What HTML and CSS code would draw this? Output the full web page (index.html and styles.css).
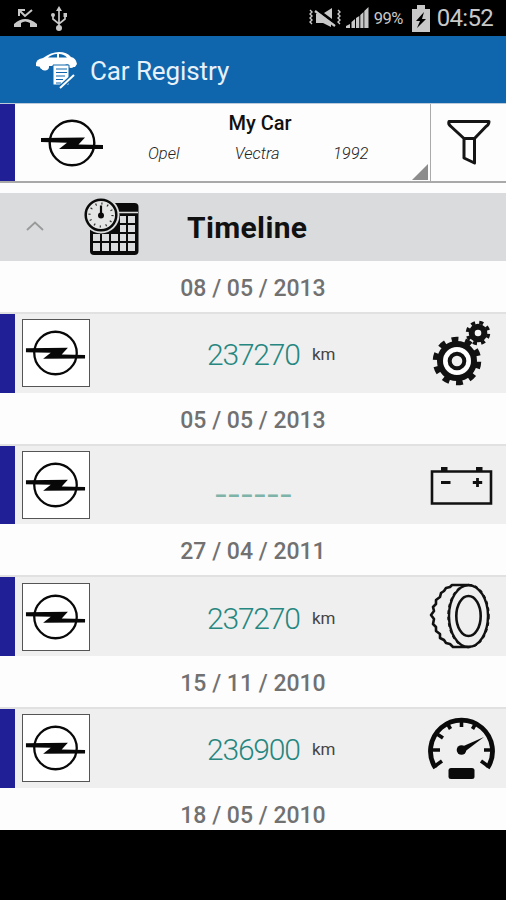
FILE: index.html
```html
<!DOCTYPE html>
<html lang="en">
<head>
<meta charset="utf-8">
<title>Car Registry</title>
<link rel="stylesheet" href="styles.css">
</head>
<body>
<svg class="defs" width="0" height="0">
  <symbol id="opel" viewBox="-32 -25 64 50">
    <circle r="22.300" fill="none" stroke="#080808" stroke-width="2.400"/>
    <path fill="#080808" d="M-31-4.900 13-5.600 6.500 1.600 31 2V5.900L-13 6-5-.2-31-.9Z"/>
  </symbol>
</svg>
<div class="status">
  <svg class="status-left" width="50" height="26" viewBox="0 0 50 26">
    <path d="M1 22V19Q12 9 24 19V22H17V18Q12 15 8 18V22Z" fill="#c8c8c8"/>
    <path d="M6 11V5H12M7 6 12 11 19 5" fill="none" stroke="#c8c8c8" stroke-width="2"/>
    <path d="M46 4V23M40 9V14L46 19 52 14V9" fill="none" stroke="#c8c8c8" stroke-width="1.700"/>
    <path d="M46 1 49 6H43Z" fill="#c8c8c8"/><circle cx="46" cy="23" r="3" fill="#c8c8c8"/><circle cx="40" cy="10" r="2" fill="#c8c8c8"/><path d="M50.500 8h3.500v4h-3.500z" fill="#c8c8c8"/>
  </svg>
  <svg class="signal" width="62" height="24" viewBox="0 0 62 24">
    <g fill="none" stroke="#c8c8c8" stroke-width="1.400"><path d="M2 4 4 6 2 8 4 10 2 12 4 14 2 16 4 18M30 4 32 6 30 8 32 10 30 12 32 14 30 16 32 18"/><path d="M7 5 27 20" stroke-width="2.200"/></g>
    <path d="M8 8V17H15L23 21V17L12 8ZM16 7 24 2V13Z" fill="#c8c8c8"/><path d="M9 4 29 19" stroke="#000"/>
    <path fill="#c8c8c8" d="M38 22V20L42 18V22ZM43.500 22V16L47 13V22ZM48 22V12L51.300 10V22ZM52.300 22V9L55.500 6V22ZM56.300 22V5L60.500 1V22Z"/>
  </svg>
  <span class="percent">99%</span>
  <svg class="charge" width="18" height="27" viewBox="0 0 18 27"><path d="M0 4H5V0H13V4H18V27H0Z" fill="#c8c8c8"/><path d="M12 7 4 16H8L5 23 14 14H10Z" fill="#000"/></svg>
  <span class="clock">04:52</span>
</div>
<header class="appbar">
  <svg width="42" height="38" viewBox="0 0 42 38">
    <path fill="#fff" d="M1 15Q0 8 8 7 16 1 24 1 32 1 36 6 41 7 42 13L40 16H36A4 4 0 0 0 29 15H14A4 4 0 0 1 6 16Z"/>
    <circle cx="8" cy="15" r="3.200" fill="#fff"/><circle cx="36" cy="14" r="3" fill="#fff"/>
    <path fill="#0f66ad" d="M13 6.500Q17 3 22 3V6.500ZM24 3Q29 3 32 6.500H24Z"/>
    <path d="M18 14H34V34H18Z" fill="#fff" stroke="#0f66ad"/>
    <path d="M21 18H32M21 21.500H32M21 25H30M21 28.500H28M21 32H26" stroke="#0f66ad" stroke-width="1.200"/>
    <path d="M26 36 38 25" stroke="#0f66ad" stroke-width="4.500"/><path d="M25 37 39 24" stroke="#fff" stroke-width="2"/>
  </svg>
  <h1>Car Registry</h1>
</header>
<section class="car">
  <div class="stripe"></div>
  <div class="spinner">
    <svg class="car-logo" width="64" height="50"><use href="#opel"/></svg>
    <div class="car-info">
      <div class="car-name">My Car</div>
      <div class="car-spec"><span>Opel</span><span>Vectra</span><span>1992</span></div>
    </div>
  </div>
  <div class="filter">
    <svg width="46" height="48" viewBox="0 0 46 48"><path d="M3 3.500H43Q43 6.500 40 8.500L28.500 20.500H18L5 8.500Q2 6.500 3 3.500ZM18 21V40L28.500 45V21" fill="none" stroke="#151515" stroke-width="3" stroke-linejoin="round"/></svg>
  </div>
</section>
<section class="group">
  <svg class="chevron" width="18" height="10" viewBox="0 0 18 10"><path d="M1 9 9 1.500 17 9" fill="none" stroke="#999" stroke-width="1.800"/></svg>
  <svg class="calendar" width="56" height="58" viewBox="0 0 56 58">
    <rect x="6" y="5" width="48.500" height="52" rx="4" fill="#0a0a0a"/>
    <path d="M8 14.500H54" stroke="#d9dbdc" stroke-width="1.600"/>
    <path fill="#d9dbdc" d="M36 18h6v7h-6zM44 18h7v7h-7zM36 27h6v7h-6zM44 27h7v7h-7zM9 36h7v7H9zM18 36h7v7h-7zM27 36h7v7h-7zM36 36h6v7h-6zM44 36h7v7h-7zM9 45h7v8H9zM18 45h7v8h-7zM27 45h7v8h-7zM36 45h6v8h-6zM44 45h7v8h-7z"/>
    <circle cx="17" cy="17" r="18.500" fill="#d9dbdc"/><circle cx="17" cy="17" r="15.300" fill="#e4e5e5" stroke="#0a0a0a" stroke-width="2.500"/>
    <circle cx="17" cy="17" r="11.500" fill="none" stroke="#333" stroke-width="2.200" stroke-dasharray="1.200 4.821"/>
    <path d="M17 17V7.500" stroke="#0a0a0a" stroke-width="2.200"/><circle cx="17" cy="17.500" r="3" fill="#0a0a0a"/>
  </svg>
  <h2>Timeline</h2>
</section>
<main class="timeline">
  <div class="date">08 / 05 / 2013</div>
  <article class="entry">
    <div class="stripe"></div>
    <div class="badge"><svg width="61" height="48"><use href="#opel"/></svg></div>
    <div class="reading"><span class="digits">237270</span><span class="unit">km</span></div>
    <svg class="kind" width="70" height="70" viewBox="0 0 70 70">
      <circle cx="31" cy="43" r="21.500" fill="none" stroke="#111" stroke-width="5.500" stroke-dasharray="6.750 6.759" transform="rotate(2 31 43)"/>
      <circle cx="31" cy="43" r="17" fill="none" stroke="#111" stroke-width="6"/>
      <circle cx="31" cy="43" r="11.500" fill="none" stroke="#fff" stroke-width="4"/>
      <circle cx="31" cy="43" r="7.300" fill="#efefef" stroke="#111" stroke-width="4"/>
      <circle cx="52" cy="15" r="10.500" fill="none" stroke="#111" stroke-width="3.500" stroke-dasharray="4.120 4.127" transform="rotate(5 52 15)"/>
      <circle cx="52" cy="15" r="6.300" fill="#f5f5f5" stroke="#111" stroke-width="6"/>
    </svg>
  </article>
  <div class="date">05 / 05 / 2013</div>
  <article class="entry">
    <div class="stripe"></div>
    <div class="badge"><svg width="61" height="48"><use href="#opel"/></svg></div>
    <div class="reading"><span class="digits blank">______</span></div>
    <svg class="kind" width="70" height="70" viewBox="0 0 70 70">
      <path d="M6 21.500H65V53.500H6Z" fill="none" stroke="#111" stroke-width="2.600"/>
      <path d="M15 17h6.500v4H15zM50 17h6.500v4H50z" fill="#111"/><path d="M15 32.500H24.500M46.800 32.500H56.200M51.500 28V37" stroke="#111" stroke-width="2.800"/>
    </svg>
  </article>
  <div class="date">27 / 04 / 2011</div>
  <article class="entry">
    <div class="stripe"></div>
    <div class="badge"><svg width="61" height="48"><use href="#opel"/></svg></div>
    <div class="reading"><span class="digits">237270</span><span class="unit">km</span></div>
    <svg class="kind" width="70" height="70" viewBox="0 0 70 70">
      <g fill="none" stroke="#111" stroke-width="2.600" stroke-linejoin="round">
        <path d="M43 3H26L24 5 20 6 18 9 15 11 14 15 10 18 10 22 7 25 8 29 5 33 8 37 7 42 10 45 10 49 14 52 14 56 18 58 20 61 24 62 27 65H43"/>
        <ellipse cx="42.500" cy="34" rx="19.500" ry="30.800" fill="#efefef" stroke-width="2.400"/>
        <ellipse cx="42.500" cy="34" rx="20.500" ry="31.500" stroke-width="1.500" stroke-dasharray="3.500 3"/>
        <ellipse cx="42.500" cy="34" rx="12.200" ry="20" stroke-width="2.600"/>
      </g>
    </svg>
  </article>
  <div class="date">15 / 11 / 2010</div>
  <article class="entry">
    <div class="stripe"></div>
    <div class="badge"><svg width="61" height="48"><use href="#opel"/></svg></div>
    <div class="reading"><span class="digits">236900</span><span class="unit">km</span></div>
    <svg class="kind" width="70" height="70" viewBox="0 0 70 70">
      <path d="M9.500 55A31 31 0 1 1 61.500 55" fill="none" stroke="#0a0a0a" stroke-width="4.800"/>
      <path d="M9 53 16 48M5 37H14M11 21 17 25M20.500 9 24.500 16M35.500 6V14M50.500 9 46.500 16M67 37H58M62 53 55 48" stroke="#0a0a0a" stroke-width="3.600"/>
      <circle cx="35.500" cy="37" r="4.800" fill="#0a0a0a"/><path d="M33 35 58 24 37 40Z" fill="#0a0a0a"/>
      <rect x="22.500" y="55" width="26" height="11" rx="2.500" fill="#0a0a0a"/>
    </svg>
  </article>
  <div class="date">18 / 05 / 2010</div>
</main>
</body>
</html>
```

FILE: styles.css
```css
* { box-sizing: border-box; }
body {
  margin: 0;
  height: 900px;
  overflow: hidden;
  background: #000;
  font-family: Roboto, sans-serif;
  color: #111;
}
h1, h2 { margin: 0; }
svg { display: block; flex: none; }
.defs { position: absolute; }

.status {
  display: flex;
  height: 36px;
  padding: 5px 13px 0 13px;
  color: #c8c8c8;
}
.status-left { overflow: visible; }
.signal { margin: 1px 0 0 auto; }
.percent { width: 43px; padding-left: 4px; font-size: 16.500px; line-height: 28px; letter-spacing: -0.5px; }
.charge { margin-left: -1px; }
.clock { margin-left: 7px; font-size: 24px; line-height: 27px; letter-spacing: -0.7px; white-space: nowrap; }

.appbar {
  display: flex;
  align-items: center;
  gap: 13px;
  height: 67px;
  padding: 1px 0 0 35px;
  background: #0f66ad;
  color: #fff;
}
.appbar h1 { padding-top: 1px; font-size: 26px; font-weight: 400; letter-spacing: -0.1px; color: #e6f1fb; }

.car { display: flex; height: 80px; background: #fdfdfd; border-bottom: 2px solid #a9a9a9; border-top: 1px solid #bccbd9; }
.stripe { width: 15px; flex: none; background: #211f96; }
.spinner { position: relative; display: flex; flex: 1; padding-left: 25px; border-right: 1px solid #aaa; }
.spinner::after {
  content: "";
  position: absolute;
  right: 2px;
  bottom: 1px;
  border-left: 16px solid transparent;
  border-bottom: 16px solid #8c8c8c;
}
.car-logo { margin-top: 14px; }
.car-info { width: 282px; margin-left: 15px; padding-top: 7px; text-align: center; }
.car-name { font-size: 20px; font-weight: 500; line-height: 24px; color: #111; }
.car-spec { display: grid; grid-template-columns: repeat(3, 93.500px); margin-left: -2px; padding-top: 9px; font-size: 16.500px; line-height: 20px; font-style: italic; font-weight: 300; color: #222; }
.filter { width: 75px; padding: 14px 0 0 15px; }

.group {
  display: flex;
  height: 78px;
  padding-left: 26px;
  border-top: 10px solid #fdfdfd;
  background: #d9dbdc;
}
.chevron { margin-top: 28px; }
.calendar { margin: 5px 0 0 40px; }
.group h2 { margin-left: 47px; font-size: 30px; font-weight: 700; line-height: 70px; letter-spacing: 0.350px; }

.timeline { height: 569px; overflow: hidden; background: #fdfdfd; }
.date { height: 51px; font-size: 23px; font-weight: 500; line-height: 55px; text-align: center; color: #717171; }
.entry {
  display: flex;
  align-items: center;
  height: 80.700px;
  border-top: 2px solid #e1e1e1;
  background: #efefef;
}
.entry .stripe { align-self: stretch; }
.badge {
  display: flex;
  align-items: center;
  justify-content: center;
  width: 68px;
  height: 68px;
  margin-left: 7px;
  border: 1px solid #555;
  background: #fff;
}
.badge svg { margin-right: 1px; }
.reading { display: flex; flex: 1; padding: 4px 0 0 117px; }
.digits { width: 94px; font-size: 30px; font-weight: 300; line-height: 36px; letter-spacing: -1.2px; color: #25877f; }
.blank { margin-left: 9px; font-size: 22px; font-weight: 700; line-height: 29px; letter-spacing: 3.200px; color: #7db3a8; }
.unit { margin-left: 11px; font-size: 17px; line-height: 34px; color: #444; }
.kind { margin-right: 10px; }
```
